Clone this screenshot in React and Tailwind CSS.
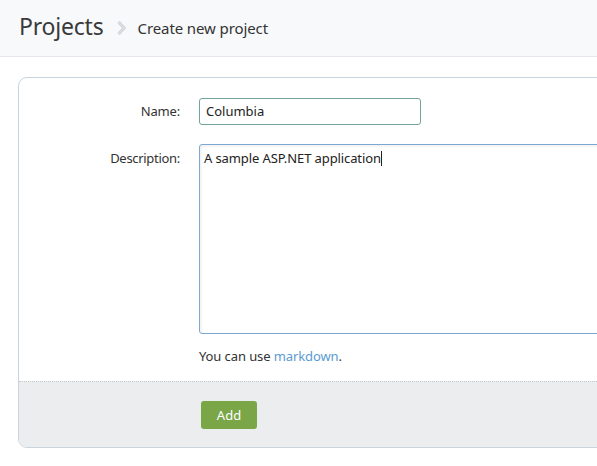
export default function App() {
  const font = { fontFamily: '"Segoe UI", "Noto Sans", "Open Sans", sans-serif' };
  return (
    <div className="w-[597px] h-[466px] overflow-hidden bg-white text-[#333]" style={font}>
      <div className="h-[57px] bg-[#f8f9fb] border-b border-[#e4e8ec] flex items-center pl-[19px] pb-[4px]">
        <span className="text-[23px] leading-none text-[#3a3a3a] tracking-[-0.2px]">Projects</span>
        <svg className="ml-[13px] mr-[12px] mt-[4px]" width="9" height="14" viewBox="0 0 9 14">
          <path d="M1.5 1 L7 7 L1.5 13" fill="none" stroke="#d0d5da" strokeWidth="3.2" strokeLinejoin="miter" />
          <path d="M1.5 1 L7 7 L1.5 13" fill="none" stroke="#e3e6e9" strokeWidth="1" />
        </svg>
        <span className="text-[15px] leading-none text-[#333] mt-[4px] tracking-[-0.1px]">Create new project</span>
      </div>
      <div className="mt-[20px] ml-[18px] w-[620px] border border-[#c9d4de] rounded-[9px] overflow-hidden">
        <div className="pt-[20px] pb-[14px]">
          <div className="flex items-center">
            <label className="w-[161px] shrink-0 text-right text-[13px] text-[#333] tracking-[-0.2px]">Name:</label>
            <div className="ml-[19px] w-[222px] shrink-0 h-[27px] border border-[#6fa59a] rounded-[3px] flex items-center px-[6px] text-[13px] text-[#222]">
              Columbia
            </div>
          </div>
          <div className="flex items-start mt-[19px]">
            <label className="w-[161px] shrink-0 text-right text-[13px] text-[#333] pt-[5px] tracking-[-0.3px]">Description:</label>
            <div className="ml-[19px] shrink-0">
              <div className="w-[440px] h-[190px] border border-[#7ea8d2] rounded-[3px] shadow-[inset_1px_1px_3px_rgba(0,0,0,0.08)] px-[4px] pt-[4px] text-[13px] text-[#222] tracking-[-0.1px]">
                A sample ASP.NET application<span className="inline-block w-px h-[15px] bg-[#222] align-[-3px]"></span>
              </div>
              <div className="mt-[13px] text-[13px] text-[#333] tracking-[-0.1px]">
                You can use <span className="text-[#5b9bd1]">markdown</span>.
              </div>
            </div>
          </div>
        </div>
        <div className="bg-[#ecedef] border-t border-dotted border-[#c4c6c9] h-[66px] flex items-center pl-[182px] pt-[2px]">
          <button className="w-[56px] h-[28px] bg-[#7aa648] rounded-[3px] text-white text-[13px] leading-none">Add</button>
        </div>
      </div>
    </div>
  );
}
